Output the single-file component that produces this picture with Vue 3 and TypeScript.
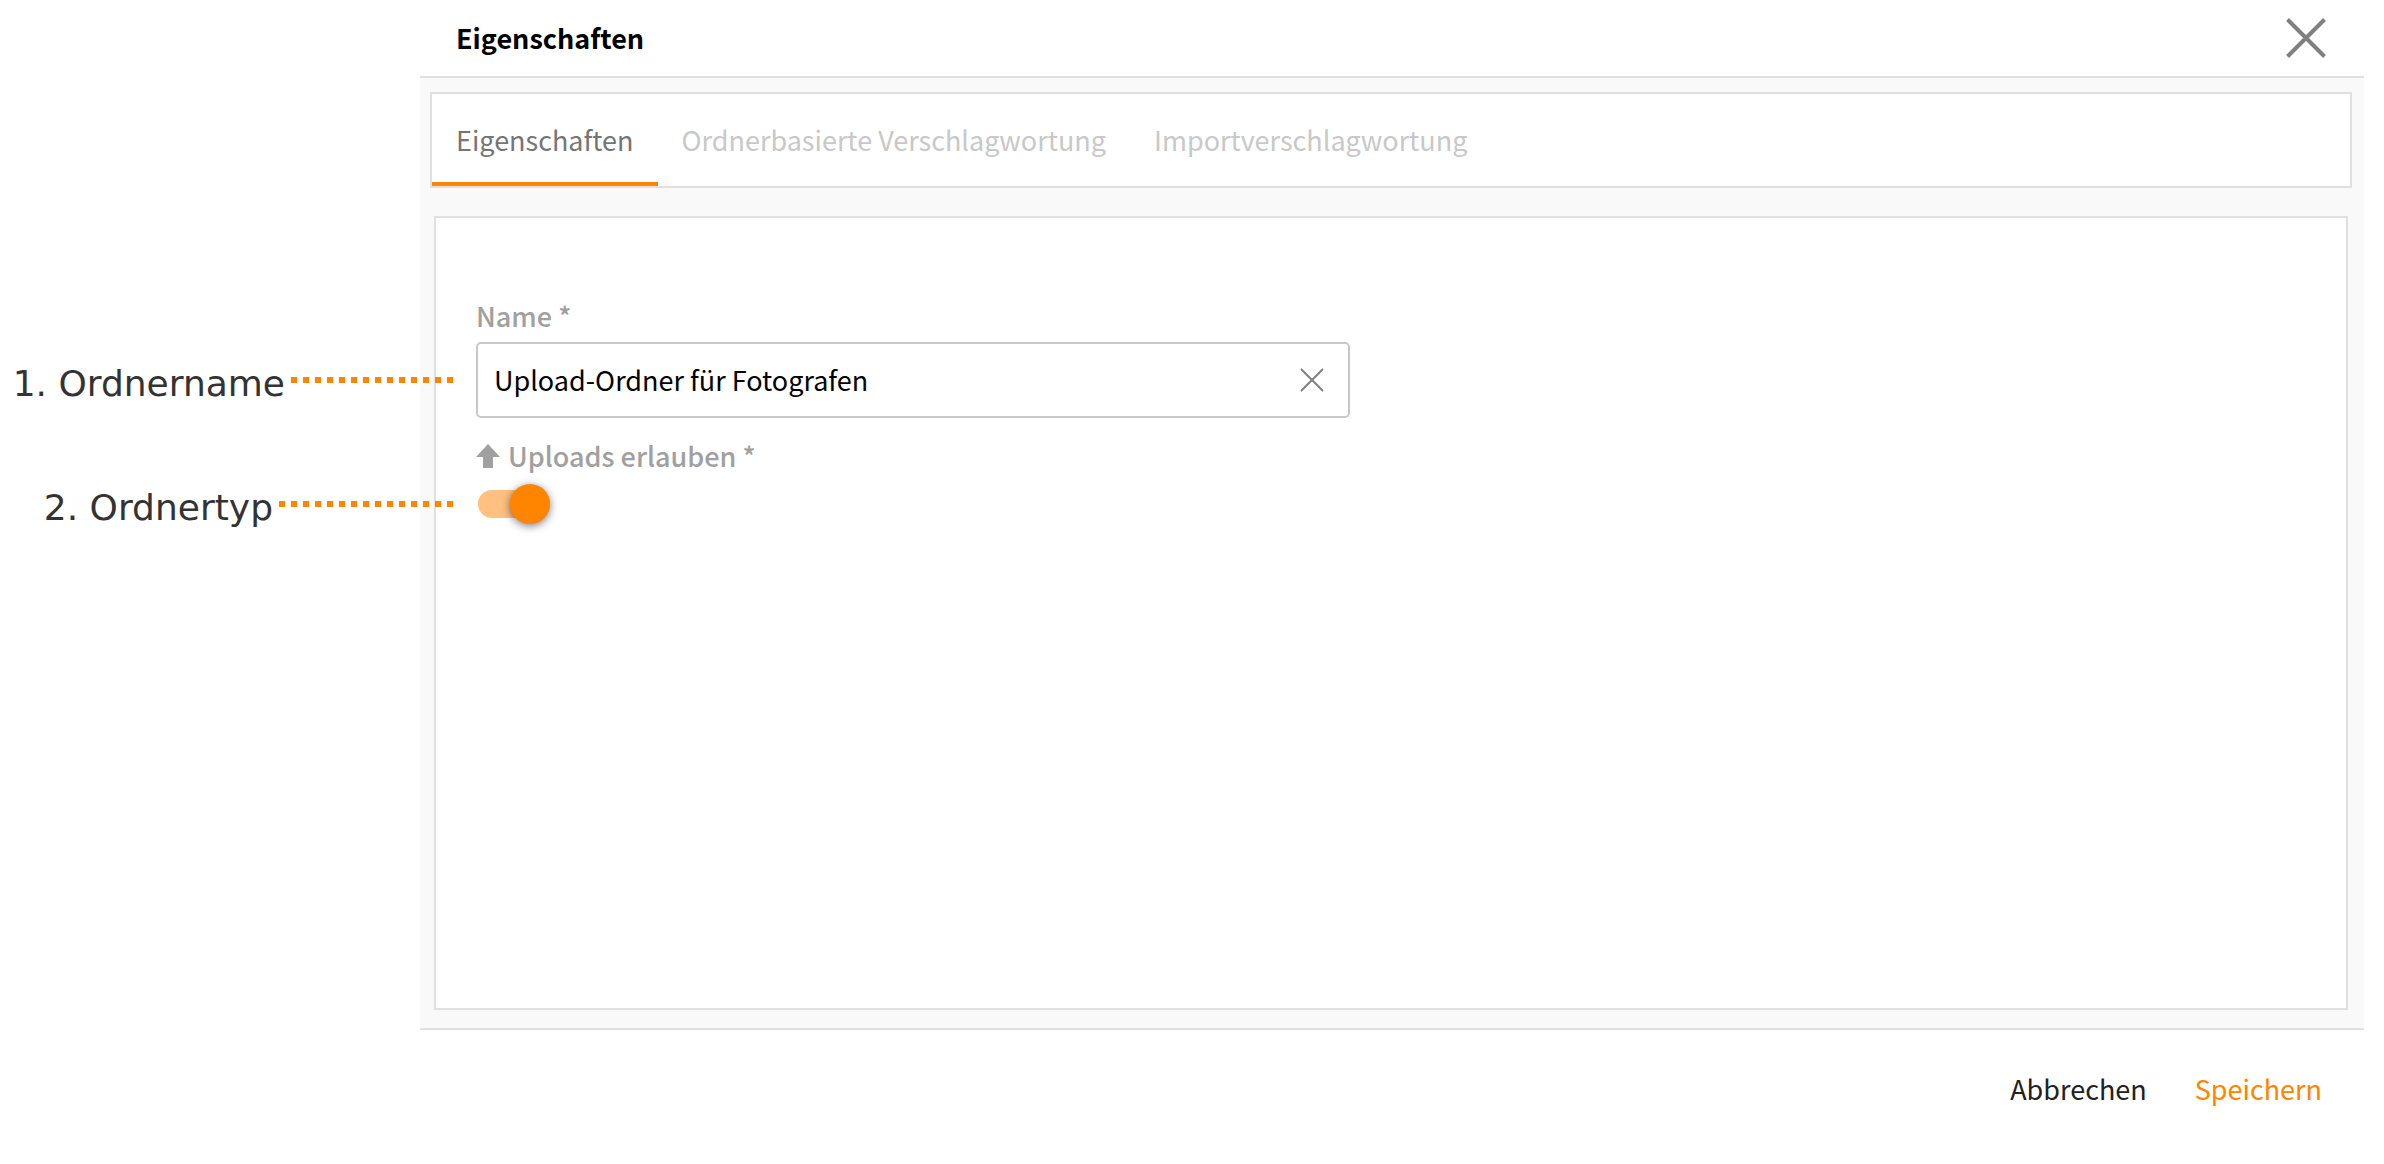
<script setup lang="ts">
import { ref } from 'vue'

const tabs: string[] = ['Eigenschaften', 'Ordnerbasierte Verschlagwortung', 'Importverschlagwortung']
const activeTab = ref(0)
const folderName = ref('Upload-Ordner für Fotografen')
const uploadsAllowed = ref(true)
</script>

<template>
  <div class="page">
    <section class="dialog" role="dialog" aria-labelledby="dialog-title">
      <header class="header">
        <h1 id="dialog-title" class="title">Eigenschaften</h1>
        <button class="icon-button" type="button" aria-label="Schließen">
          <svg width="40" height="40" viewBox="0 0 40 40" fill="none" stroke="#808080" stroke-width="4">
            <path d="M1.500 1.500L38.500 38.500M38.500 1.500L1.500 38.500" />
          </svg>
        </button>
      </header>

      <div class="content">
        <nav class="tabs" role="tablist">
          <button
            v-for="(tab, index) in tabs"
            :key="tab"
            class="tab"
            :class="{ active: index === activeTab }"
            type="button"
            role="tab"
            :aria-selected="index === activeTab"
            @click="activeTab = index"
          >
            {{ tab }}
          </button>
        </nav>

        <form class="panel" @submit.prevent>
          <label class="label" for="folder-name">Name *</label>
          <div class="field">
            <input id="folder-name" v-model="folderName" class="input" type="text" />
            <button class="icon-button" type="button" aria-label="Leeren" @click="folderName = ''">
              <svg width="24" height="24" viewBox="0 0 24 24" fill="none" stroke="#808080" stroke-width="2">
                <path d="M1 1L23 23M23 1L1 23" />
              </svg>
            </button>
          </div>
          <label class="label upload-label" for="uploads">
            <svg width="24" height="24" viewBox="0 0 24 24" fill="#a0a0a0">
              <path d="M12 0L24 13H17V24H7V13H0Z" />
            </svg>
            Uploads erlauben *
          </label>
          <input id="uploads" v-model="uploadsAllowed" class="switch" type="checkbox" />
        </form>
      </div>

      <footer class="footer">
        <button class="action" type="button">Abbrechen</button>
        <button class="action primary" type="button">Speichern</button>
      </footer>
    </section>

    <aside class="notes">
      <div class="note"><span>1. Ordnername</span><i class="dots"></i></div>
      <div class="note"><span>2. Ordnertyp</span><i class="dots long"></i></div>
    </aside>
  </div>
</template>

<style>
body {
  margin: 0;
  background: #fff;
}
</style>

<style scoped>
.page {
  position: relative;
  box-sizing: border-box;
  min-height: 100vh;
  padding: 0 20px 0 420px;
  display: flex;
  font-family: "Noto Sans CJK SC", "Noto Sans", sans-serif;
  font-size: 27px;
  line-height: 36px;
}
button,
input {
  font: inherit;
  margin: 0;
  border: 0;
  padding: 0;
  background: none;
}
button {
  cursor: pointer;
}
svg {
  display: block;
}
.dialog {
  flex: 1;
  min-width: 0;
  display: flex;
  flex-direction: column;
}
.header {
  display: flex;
  align-items: center;
  justify-content: space-between;
  height: 76px;
  padding: 0 38px 0 36px;
}
.title {
  margin: 0;
  font-size: 27px;
  font-weight: 700;
  color: #000;
}
.content {
  flex: 1;
  display: flex;
  flex-direction: column;
  gap: 28px;
  padding: 14px 12px 18px 10px;
  border-top: 2px solid #e0e0e0;
  border-bottom: 2px solid #e0e0e0;
  background: #f9f9f9;
}
.tabs {
  display: flex;
  border: 2px solid #e0e0e0;
  background: #fff;
}
.tab {
  height: 92px;
  padding: 4px 24px 0;
  border-bottom: 4px solid transparent;
  color: #c8c8c8;
}
.tab.active {
  border-bottom-color: #ff8400;
  color: #757575;
}
.panel {
  flex: 1;
  display: flex;
  flex-direction: column;
  align-items: flex-start;
  margin: 0 4px;
  padding: 80px 50px 40px 40px;
  border: 2px solid #e0e0e0;
  background: #fff;
}
.label {
  font-weight: 500;
  color: #a0a0a0;
}
.field {
  box-sizing: border-box;
  display: flex;
  align-items: center;
  width: 48%;
  height: 76px;
  margin: 8px 0 20px;
  padding: 0 24px 0 16px;
  border: 2px solid #c8c8c8;
  border-radius: 5px;
}
.input {
  flex: 1;
  min-width: 0;
  outline: none;
  color: #000;
}
.upload-label {
  display: flex;
  align-items: center;
  gap: 8px;
}
.switch {
  appearance: none;
  display: flex;
  align-items: center;
  width: 72px;
  height: 28px;
  margin: 16px 2px;
  border-radius: 14px;
  background: #c8c8c8;
  cursor: pointer;
}
.switch::before {
  content: "";
  width: 40px;
  height: 40px;
  flex: none;
  border-radius: 50%;
  background: #fff;
  box-shadow: 0 2px 8px rgba(0, 0, 0, 0.5);
}
.switch:checked {
  justify-content: flex-end;
  background: #ffc080;
}
.switch:checked::before {
  background: #ff8400;
}
.footer {
  box-sizing: border-box;
  display: flex;
  justify-content: flex-end;
  align-items: center;
  gap: 48px;
  height: 134px;
  padding: 0 42px 16px;
}
.action {
  color: #212121;
}
.action.primary {
  color: #ff8400;
}
.notes {
  position: absolute;
  top: 360px;
  left: 0;
  width: 453px;
  display: flex;
  flex-direction: column;
  gap: 76px;
  pointer-events: none;
  font-family: "DejaVu Sans", Verdana, sans-serif;
  font-size: 36px;
  line-height: 48px;
  color: #333;
}
.note {
  display: flex;
  justify-content: flex-end;
  gap: 6px;
  white-space: nowrap;
}
.dots {
  width: 162px;
  height: 6px;
  margin-top: 17px;
  background: repeating-linear-gradient(90deg, #ff8400 0 6px, transparent 6px 12px);
}
.dots.long {
  width: 174px;
}
</style>
